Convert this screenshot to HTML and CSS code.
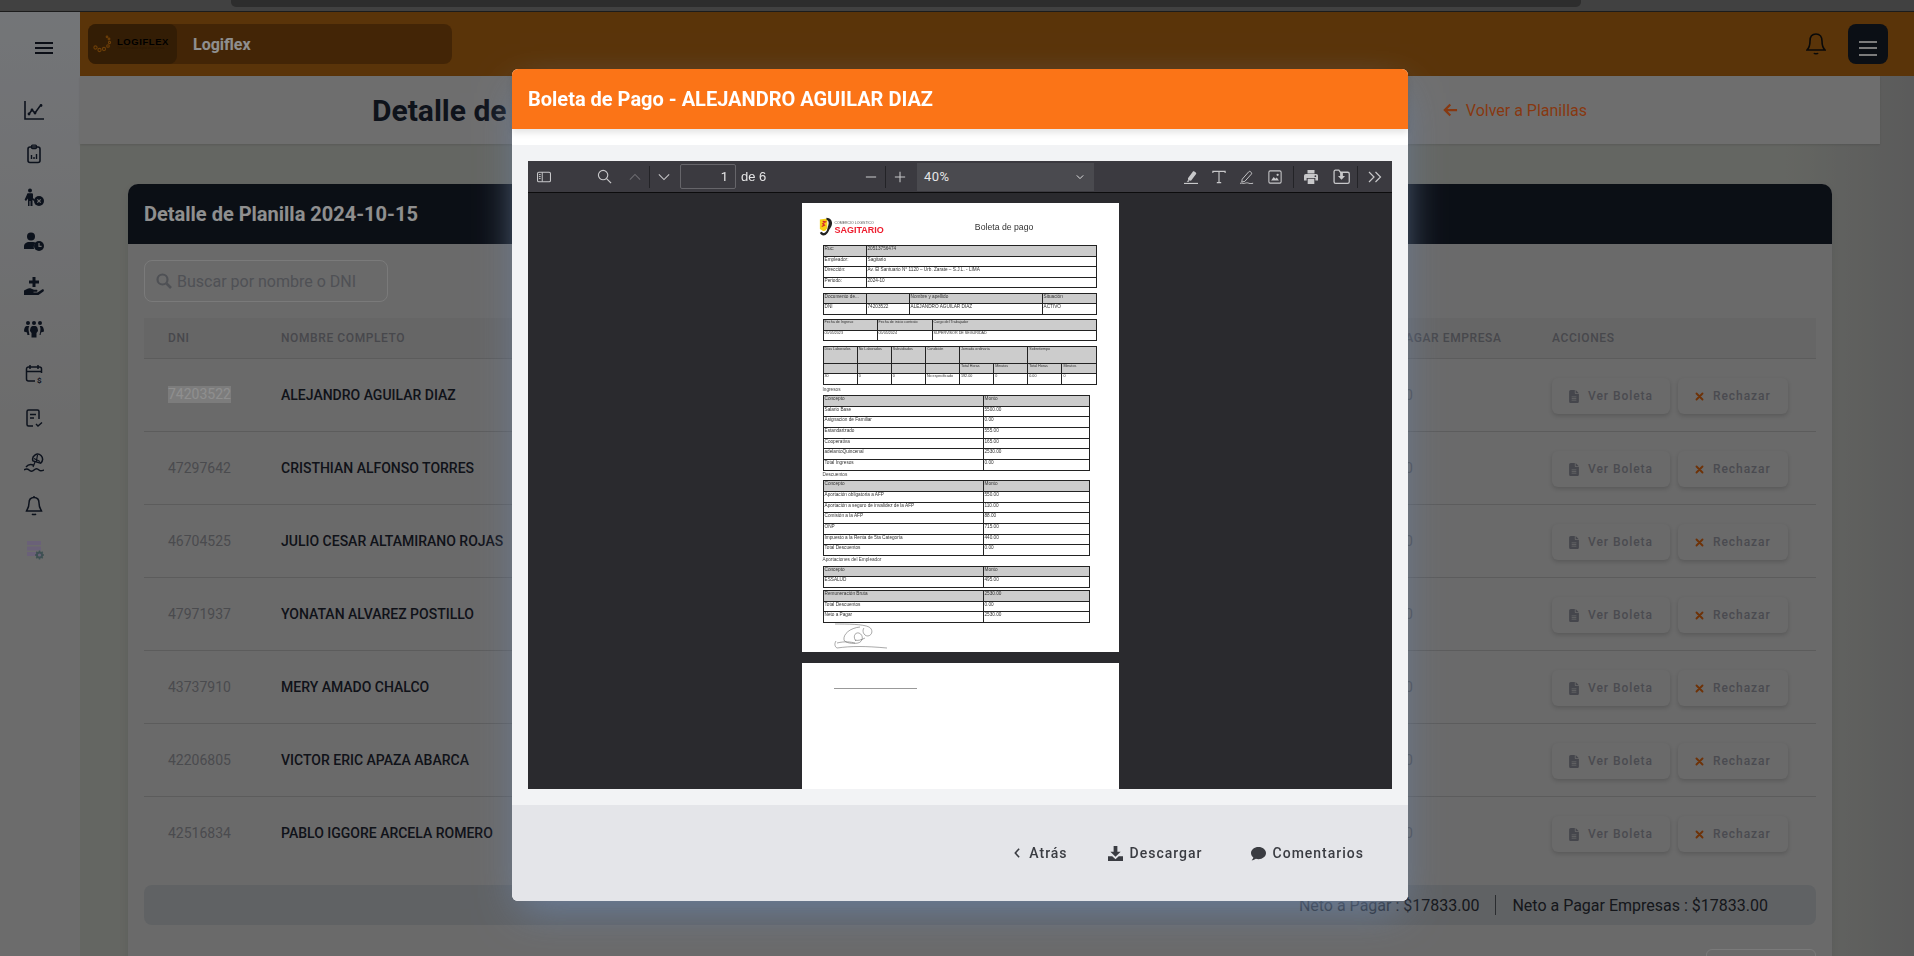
FILE: index.html
```html
<!DOCTYPE html>
<html lang="es">
<head>
  <meta charset="UTF-8" />
  <title>Logiflex - Detalle de Planilla</title>
  <meta name="viewport" content="width=device-width, initial-scale=1" />
  <link rel="stylesheet" href="styles.css">
</head>
<body>
  <svg class="sprite" aria-hidden="true">
    <symbol id="i-doc" viewBox="0 0 384 512"><path fill="currentColor" d="M64 0C29 0 0 29 0 64v384c0 35 29 64 64 64h256c35 0 64-29 64-64V160H256c-18 0-32-14-32-32V0H64zm192 0v128h128L256 0zM112 256h160c9 0 16 7 16 16s-7 16-16 16H112c-9 0-16-7-16-16s7-16 16-16zm0 64h160c9 0 16 7 16 16s-7 16-16 16H112c-9 0-16-7-16-16s7-16 16-16zm0 64h160c9 0 16 7 16 16s-7 16-16 16H112c-9 0-16-7-16-16s7-16 16-16z"/></symbol>
    <symbol id="i-x" viewBox="0 0 24 24"><path fill="none" stroke="currentColor" stroke-width="5" stroke-linecap="round" d="M4 4l16 16M20 4L4 20"/></symbol>
  </svg>

  <div class="browser-strip"><div class="browser-tab"></div></div>

  <div class="app">
    <aside class="sidebar">
      <button class="side-burger"><span></span><span></span><span></span></button>
      <nav class="side-nav">
        <svg viewBox="0 0 20 20"><path d="M1 1v18h19" fill="none" stroke="currentColor" stroke-width="1.600"/><path d="M5 14l3-4 3 3 5-7" fill="none" stroke="currentColor" stroke-width="1.500"/><circle cx="5" cy="14" r="1.400" fill="currentColor"/><circle cx="8" cy="10" r="1.400" fill="currentColor"/><circle cx="11" cy="13" r="1.400" fill="currentColor"/><circle cx="17" cy="5.500" r="1.400" fill="currentColor"/></svg>
        <svg viewBox="0 0 20 20"><rect x="4" y="3" width="12" height="15.500" rx="2" fill="none" stroke="currentColor" stroke-width="1.600"/><rect x="7.500" y="1.200" width="5" height="3.400" rx="1" fill="none" stroke="currentColor" stroke-width="1.300"/><path d="M7.500 15v-4M10 15v-2M12.500 15v-5" stroke="currentColor" stroke-width="1.400"/></svg>
        <svg viewBox="0 0 20 20"><circle cx="6" cy="2.500" r="2" fill="currentColor"/><path d="M3 6.500c0-.8.600-1.300 1.300-1.300h3.400c.7 0 1.300.5 1.300 1.300V10l2 2-1 1-1.500-1.300V18H6.500v-5h-1v5H4v-7.500L2 13 .6 11.800z" fill="currentColor"/><circle cx="15" cy="13" r="5" fill="currentColor"/><path d="M13.300 11.300l3.400 3.400M16.700 11.300l-3.400 3.400" stroke="#c3c3c3" stroke-width="1.200"/></svg>
        <svg viewBox="0 0 20 20"><circle cx="7" cy="4.500" r="4" fill="currentColor"/><path d="M0 17v-2.500C0 11.500 2.500 10 5 10h4c1 0 2 .2 2.700.7A6.500 6.500 0 0 0 10 17z" fill="currentColor"/><circle cx="15" cy="14" r="5" fill="currentColor"/><path d="M15 11v3.300h2.600" fill="none" stroke="#c3c3c3" stroke-width="1.200"/></svg>
        <svg viewBox="0 0 20 20"><path d="M8.500 1h3v3.500H15v3h-3.500V11h-3V7.500H5v-3h3.500z" fill="currentColor"/><path d="M0 14.500l3-1.500c1.500-.8 3-.8 4.500-.2l2.500 1h2.500c1.300 0 1.300 2 0 2H9.500v.6h4l4.500-2.900c1.400-.8 2.600 1 1.400 2L14.500 19H0z" fill="currentColor"/></svg>
        <svg viewBox="0 0 20 20"><circle cx="4" cy="3" r="2" fill="currentColor"/><circle cx="10" cy="3" r="2" fill="currentColor"/><circle cx="16" cy="3" r="2" fill="currentColor"/><path d="M2.500 6h2.800c-.7 1-1 3-.5 5.500l.7 3.500H3.400L3 12.500 0 11.500C0 8.500 1 6 2.500 6zM14.700 6h2.800c1.500 0 2.500 2.500 2.500 5.500l-3 1-.4 2.500h-1.100l.7-3.500c.5-2.500.2-4.500-.5-5.500zM8.500 6h3c1.500 0 2.500 2.500 2.500 5l-1.500 2v4.500h-5V13L6 11c0-2.500 1-5 2.500-5z" fill="currentColor"/></svg>
        <svg viewBox="0 0 20 20"><path d="M11 17H4.500A2 2 0 0 1 2.500 15V5a2 2 0 0 1 2-2h11a2 2 0 0 1 2 2v4M2.500 7.500h15M6 1v4M14 1v4" fill="none" stroke="currentColor" stroke-width="1.500"/><text class="side-dollar" x="13" y="19">$</text></svg>
        <svg viewBox="0 0 20 20"><path d="M9 18H4.500A1.500 1.500 0 0 1 3 16.500V3.500A1.500 1.500 0 0 1 4.500 2h9A1.500 1.500 0 0 1 15 3.500V11" fill="none" stroke="currentColor" stroke-width="1.500"/><path d="M6 6.500h6M6 10h4M12 16l2 2 4-3.500" fill="none" stroke="currentColor" stroke-width="1.400"/></svg>
        <svg viewBox="0 0 20 20"><path d="M9 9a5 5 0 0 1 8-5.500 5 5 0 0 1-.3 7.600z" fill="none" stroke="currentColor" stroke-width="1.500"/><path d="M13.500 3l-1.300 7M10 6.500l6 3M11 10l-2 5" fill="none" stroke="currentColor" stroke-width="1.200"/><path d="M2 15c2.500-3 5-3 8-1.500M0 18c2-1.500 3.500-1.500 5 0s3.500 1.500 5 0 3.500-1.500 5 0 3 .8 5 0" fill="none" stroke="currentColor" stroke-width="1.500"/></svg>
        <svg viewBox="0 0 20 20"><path d="M10 1.500c-3.500 0-5 2.500-5 5.500 0 5-2 6.500-2.500 8h15c-.5-1.500-2.500-3-2.500-8 0-3-1.500-5.500-5-5.500zM8 18c.7.8 3.300.8 4 0M10 0v1.500" fill="none" stroke="currentColor" stroke-width="1.500"/></svg>
        <svg viewBox="0 0 20 20"><rect x="3" y="1" width="14" height="4" fill="#bdaed6"/><rect x="3" y="6.500" width="14" height="4" fill="#bdaed6"/><rect x="3" y="12" width="14" height="4" fill="#bdaed6"/><circle cx="15.500" cy="15" r="2.600" fill="none" stroke="#6f8f94" stroke-width="2"/><path d="M15.500 10.500v2M15.500 17.500v2M11 15h2M18 15h2M12.300 11.800l1.400 1.400M17.300 16.800l1.400 1.400M18.700 11.800l-1.400 1.400M13.700 16.800l-1.400 1.400" stroke="#6f8f94" stroke-width="1.500"/></svg>
      </nav>
    </aside>

    <div class="main">
      <header class="topbar">
        <div class="brand">
          <div class="brand-logo">
            <svg viewBox="0 0 20 20" class="brand-mark"><g fill="none" stroke="#c2700f" stroke-width="1.100"><circle cx="2.500" cy="13.500" r="1.600"/><circle cx="6.500" cy="16" r="1.600"/><circle cx="11" cy="15" r="1.600"/><circle cx="15" cy="12" r="1.300"/><circle cx="16.500" cy="8.500" r="1.100"/><circle cx="16" cy="5" r=".9"/><circle cx="14" cy="2.800" r=".8"/></g></svg>
            <div class="brand-words"><span class="brand-name">LOGIFLEX</span><span class="brand-sub">Transformación digital de procesos</span></div>
          </div>
          <span class="brand-title">Logiflex</span>
        </div>
        <div class="topbar-right">
          <svg viewBox="0 0 20 24" class="top-bell"><path d="M10 2C6 2 4 5 4 9c0 6-2 8-3 9h18c-1-1-3-3-3-9 0-4-2-7-6-7zM8 21c.5 1 3.500 1 4 0" fill="none" stroke="currentColor" stroke-width="1.600"/></svg>
          <button class="top-menu"><span></span><span></span><span></span></button>
        </div>
      </header>

      <section class="page-head">
        <h1>Detalle de</h1>
        <a class="back-link"><svg viewBox="0 0 16 14"><path d="M15 7H2.500M7.800 1.200L2 7l5.800 5.800" fill="none" stroke="currentColor" stroke-width="2.400"/></svg>Volver a Planillas</a>
      </section>

      <section class="card">
        <div class="card-head">Detalle de Planilla 2024-10-15</div>
        <div class="card-body">
          <div class="search">
            <svg viewBox="0 0 16 16"><circle cx="6.500" cy="6.500" r="5" fill="none" stroke="currentColor" stroke-width="2.200"/><path d="M10.500 10.500L15 15" stroke="currentColor" stroke-width="2.600"/></svg>
            <span>Buscar por nombre o DNI</span>
          </div>

          <table class="grid">
            <colgroup><col class="c-dni"><col class="c-name"><col class="c-neto"><col class="c-emp"><col class="c-act"></colgroup>
            <thead>
              <tr><th>DNI</th><th>Nombre completo</th><th></th><th>Neto a pagar empresa</th><th>Acciones</th></tr>
            </thead>
            <tbody>
              <tr><td class="dni"><span class="picked">74203522</span></td><td class="name">ALEJANDRO AGUILAR DIAZ</td><td></td><td class="amount">$2530.00</td><td><div class="actions"><button class="act"><svg class="act-doc"><use href="#i-doc"/></svg>Ver Boleta</button><button class="act"><svg class="act-x"><use href="#i-x"/></svg>Rechazar</button></div></td></tr>
              <tr><td class="dni">47297642</td><td class="name">CRISTHIAN ALFONSO TORRES</td><td></td><td class="amount">$2530.00</td><td><div class="actions"><button class="act"><svg class="act-doc"><use href="#i-doc"/></svg>Ver Boleta</button><button class="act"><svg class="act-x"><use href="#i-x"/></svg>Rechazar</button></div></td></tr>
              <tr><td class="dni">46704525</td><td class="name">JULIO CESAR ALTAMIRANO ROJAS</td><td></td><td class="amount">$2530.00</td><td><div class="actions"><button class="act"><svg class="act-doc"><use href="#i-doc"/></svg>Ver Boleta</button><button class="act"><svg class="act-x"><use href="#i-x"/></svg>Rechazar</button></div></td></tr>
              <tr><td class="dni">47971937</td><td class="name">YONATAN ALVAREZ POSTILLO</td><td></td><td class="amount">$2530.00</td><td><div class="actions"><button class="act"><svg class="act-doc"><use href="#i-doc"/></svg>Ver Boleta</button><button class="act"><svg class="act-x"><use href="#i-x"/></svg>Rechazar</button></div></td></tr>
              <tr><td class="dni">43737910</td><td class="name">MERY AMADO CHALCO</td><td></td><td class="amount">$2530.00</td><td><div class="actions"><button class="act"><svg class="act-doc"><use href="#i-doc"/></svg>Ver Boleta</button><button class="act"><svg class="act-x"><use href="#i-x"/></svg>Rechazar</button></div></td></tr>
              <tr><td class="dni">42206805</td><td class="name">VICTOR ERIC APAZA ABARCA</td><td></td><td class="amount">$2530.00</td><td><div class="actions"><button class="act"><svg class="act-doc"><use href="#i-doc"/></svg>Ver Boleta</button><button class="act"><svg class="act-x"><use href="#i-x"/></svg>Rechazar</button></div></td></tr>
              <tr><td class="dni">42516834</td><td class="name">PABLO IGGORE ARCELA ROMERO</td><td></td><td class="amount">$2530.00</td><td><div class="actions"><button class="act"><svg class="act-doc"><use href="#i-doc"/></svg>Ver Boleta</button><button class="act"><svg class="act-x"><use href="#i-x"/></svg>Rechazar</button></div></td></tr>
            </tbody>
          </table>

          <div class="totals">
            <span>Neto a Pagar : $17833.00</span>
            <i></i>
            <span>Neto a Pagar Empresas : $17833.00</span>
          </div>
          <div class="pager"><button class="pager-btn"></button></div>
        </div>
      </section>
    </div>
  </div>

  <div class="backdrop"></div>

  <div class="modal">
    <div class="modal-head">Boleta de Pago - ALEJANDRO AGUILAR DIAZ</div>
    <div class="modal-gap"></div>
    <div class="modal-body">
      <div class="viewer">
        <div class="vbar">
          <div class="vbar-left">
            <button class="vb"><svg viewBox="0 0 16 12"><rect x=".6" y=".6" width="14.800" height="10.800" rx="1.500" fill="none" stroke="currentColor" stroke-width="1.200"/><path d="M6 .6v10.800M2.200 3.200h2M2.200 5.500h2M2.200 7.800h2" stroke="currentColor" stroke-width="1.100"/></svg></button>
            <button class="vb vb-search"><svg viewBox="0 0 16 16"><circle cx="6.500" cy="6.500" r="5" fill="none" stroke="currentColor" stroke-width="1.200"/><path d="M10.200 10.200L15 15" stroke="currentColor" stroke-width="1.300"/></svg></button>
            <button class="vb vb-off"><svg viewBox="0 0 14 8"><path d="M1 7l6-6 6 6" fill="none" stroke="currentColor" stroke-width="1.200"/></svg></button>
            <i class="vsep"></i>
            <button class="vb"><svg viewBox="0 0 14 8"><path d="M1 1l6 6 6-6" fill="none" stroke="currentColor" stroke-width="1.200"/></svg></button>
            <span class="vpage">1</span>
            <span class="vof">de 6</span>
          </div>
          <div class="vbar-mid">
            <button class="vb"><svg viewBox="0 0 14 14"><path d="M1 7h12" stroke="currentColor" stroke-width="1.200"/></svg></button>
            <i class="vsep"></i>
            <button class="vb"><svg viewBox="0 0 14 14"><path d="M1 7h12M7 1v12" stroke="currentColor" stroke-width="1.200"/></svg></button>
            <div class="vzoom"><span>40%</span><svg viewBox="0 0 10 6"><path d="M1 1l4 4 4-4" fill="none" stroke="currentColor" stroke-width="1.200"/></svg></div>
          </div>
          <div class="vbar-right">
            <button class="vb"><svg viewBox="0 0 16 16"><path d="M4.500 9.500L10 2c.5-.6 1.200-.7 1.800-.3l1.700 1.200c.6.500.7 1.200.3 1.800L8 12.200l-3.200-.4zM4.800 11.500l-1.800 1.800h3" fill="currentColor"/><path d="M0 15.400h16" stroke="currentColor" stroke-width="1.400"/></svg></button>
            <button class="vb"><svg viewBox="0 0 16 16"><path d="M1 3.500V1.500h14v2M8 1.500v13M5.500 14.500h5" fill="none" stroke="currentColor" stroke-width="1.300"/></svg></button>
            <button class="vb"><svg viewBox="0 0 16 16"><path d="M2.500 10.500L10 2c.6-.6 1.300-.6 1.900-.1l1 .9c.6.600.6 1.300.1 1.900L5.500 13l-3.500.8zM0 15.300c2-1 3 .5 5 0s3-1 5-.2 3 .4 5 0" fill="none" stroke="currentColor" stroke-width="1.100"/></svg></button>
            <button class="vb"><svg viewBox="0 0 16 16"><rect x="1" y="1" width="14" height="14" rx="1.500" fill="none" stroke="currentColor" stroke-width="1.200"/><path d="M3.500 12l3-4 2 2 1.500-1.500 2.500 3.500z" fill="currentColor"/><circle cx="11" cy="5.500" r="1.300" fill="currentColor"/></svg></button>
            <i class="vsep vsep-wide"></i>
            <button class="vb"><svg viewBox="0 0 16 16"><path d="M4 0h8v4H4zM2 4.500h12a2 2 0 0 1 2 2V12h-3V9H3v3H0V6.500a2 2 0 0 1 2-2zM4.200 10h7.600v6H4.200z" fill="currentColor"/><circle cx="13" cy="7" r="1" fill="#3b3a40"/></svg></button>
            <button class="vb vb-save"><svg viewBox="0 0 16 16"><path d="M1 3.500C1 2.700 1.500 2 2.300 2h3.200l1.500 2h6.800c.8 0 1.500.7 1.500 1.500V13c0 .8-.7 1.500-1.500 1.500H2.500C1.700 14.500 1 13.800 1 13z" fill="none" stroke="currentColor" stroke-width="1.200"/><path d="M6.700 4.500h2.600v3h2L8 11 4.700 7.500h2z" fill="currentColor"/></svg></button>
            <i class="vsep vsep-last"></i>
            <button class="vb"><svg viewBox="0 0 14 12"><path d="M1 1l5 5-5 5M7.500 1l5 5-5 5" fill="none" stroke="currentColor" stroke-width="1.200"/></svg></button>
          </div>
        </div>

        <div class="vpages">
          <article class="sheet">
            <div class="doc-head">
              <div class="doc-logo">
                <svg viewBox="0 0 16 20" class="doc-hook"><path d="M2 2l8-1v9c0 3-3 5-5 4l-3-2z" fill="#f5cf16"/><path d="M9 0c4 0 6 3 6 6s-2 5-3 7c-1 3-3 6-6 6-2 0-4-2-4-3l2-1c1 1 2 2 3 1 3-1 3-5 4-8s0-5-2-6z" fill="#222"/><path d="M5 4l3 .5-3 2 2 1.500-3 1.500" fill="none" stroke="#d8222a" stroke-width="1.200"/></svg>
                <div class="doc-brand"><span class="doc-brand-top">COMERCIO LOGISTICO</span><span class="doc-brand-big">SAGITARIO</span></div>
              </div>
              <div class="doc-title">Boleta de pago</div>
            </div>

            <table class="dt dt-1">
              <colgroup><col class="w43"><col></colgroup>
              <tr class="g"><td>Ruc:</td><td>20513756474</td></tr>
              <tr><td>Empleador:</td><td>Sagitario</td></tr>
              <tr><td>Dirección:</td><td>Av. El Santuario N° 1120 – Urb. Zarate – S.J.L. - LIMA</td></tr>
              <tr><td>Periodo:</td><td>2024-10</td></tr>
            </table>

            <table class="dt dt-2">
              <colgroup><col class="w43"><col class="w43"><col class="w133"><col></colgroup>
              <tr class="g"><td>Documento de...</td><td></td><td>Nombre y apellido</td><td>Situación</td></tr>
              <tr><td>DNI</td><td>74203522</td><td>ALEJANDRO AGUILAR DIAZ</td><td>ACTIVO</td></tr>
            </table>

            <table class="dt dt-3 dt-small">
              <colgroup><col class="w54"><col class="w55"><col></colgroup>
              <tr class="g"><td>Fecha de Ingreso</td><td>Fecha de inicio contrato</td><td>Cargo del Trabajador</td></tr>
              <tr><td>05/05/2023</td><td>05/05/2024</td><td>SUPERVISOR DE SEGURIDAD</td></tr>
            </table>

            <table class="dt dt-4 dt-small">
              <tr class="g tall"><td>Días Laborados</td><td>No Laborados</td><td>Subsidiados</td><td>Condición</td><td colspan="2">Jornada ordinaria</td><td colspan="2">Sobretiempo</td></tr>
              <tr class="g"><td></td><td></td><td></td><td></td><td>Total Horas</td><td>Minutos</td><td>Total Horas</td><td>Minutos</td></tr>
              <tr><td>30</td><td>0</td><td>0</td><td>No especificado</td><td>192.00</td><td>0</td><td>0.00</td><td>0</td></tr>
            </table>

            <p class="doc-label">Ingresos</p>
            <table class="dt dt-n">
              <colgroup><col class="w160"><col></colgroup>
              <tr class="g"><td>Concepto</td><td>Monto</td></tr>
              <tr><td>Salario Base</td><td>5500.00</td></tr>
              <tr><td>Asignacion de Familiar</td><td>0.00</td></tr>
              <tr><td>Estandarizado</td><td>555.00</td></tr>
              <tr><td>Cooperativa</td><td>165.00</td></tr>
              <tr><td>adelantoQuincenal</td><td>2530.00</td></tr>
              <tr><td>Total Ingresos</td><td>0.00</td></tr>
            </table>

            <p class="doc-label">Descuentos</p>
            <table class="dt dt-n">
              <colgroup><col class="w160"><col></colgroup>
              <tr class="g"><td>Concepto</td><td>Monto</td></tr>
              <tr><td>Aportación obligatoria a AFP</td><td>550.00</td></tr>
              <tr><td>Aportación a seguro de invalidez de la AFP</td><td>110.00</td></tr>
              <tr><td>Comisión a la AFP</td><td>88.00</td></tr>
              <tr><td>ONP</td><td>715.00</td></tr>
              <tr><td>Impuesto a la Renta de 5ta Categoría</td><td>440.00</td></tr>
              <tr><td>Total Descuentos</td><td>0.00</td></tr>
            </table>

            <p class="doc-label">Aportaciones del Empleador</p>
            <table class="dt dt-n">
              <colgroup><col class="w160"><col></colgroup>
              <tr class="g"><td>Concepto</td><td>Monto</td></tr>
              <tr><td>ESSALUD</td><td>495.00</td></tr>
            </table>
            <table class="dt dt-n dt-last">
              <colgroup><col class="w160"><col></colgroup>
              <tr class="g"><td>Remuneración Bruta</td><td>2530.00</td></tr>
              <tr><td>Total Descuentos</td><td>0.00</td></tr>
              <tr><td>Neto a Pagar</td><td>2530.00</td></tr>
            </table>

            <svg viewBox="0 0 56 27" class="doc-sign"><path d="M1 1c12 0 28 0 34 3 4 2 4 8-1 9-5 0-6-6-4-8M26 4c-10 1-17 7-16 13 1 3 9 4 14 3s6-8 1-10c-5-1-6 5-3 8M2 18c-2 3-1 6 1 7 14-2 28-2 50 0M21 17c3 1 6 0 10-2M3 20c8-2 14-1 18 0" fill="none" stroke="#555" stroke-width=".5"/></svg>
          </article>

          <article class="sheet sheet-2"><div class="sign-line"></div></article>
        </div>
      </div>
    </div>
    <div class="modal-foot">
      <button class="foot-btn"><svg viewBox="0 0 8 14" class="foot-chev"><path d="M6.500 2L2 7l4.500 5" fill="none" stroke="currentColor" stroke-width="1.800"/></svg>Atrás</button>
      <button class="foot-btn"><svg viewBox="0 0 16 16" class="foot-ico"><path d="M6 0h4v6h3.500L8 11.500 2.500 6H6zM0 11h4.500L8 14l3.500-3H16v5H0z" fill="currentColor"/></svg>Descargar</button>
      <button class="foot-btn foot-last"><svg viewBox="0 0 16 16" class="foot-ico"><path d="M8 1c4.400 0 8 2.800 8 6.500S12.400 14 8 14c-1 0-2-.2-2.800-.4C4 14.500 2.500 15.200.6 15.200c1-.9 1.700-2 1.900-3C.9 11 0 9.400 0 7.500 0 3.800 3.600 1 8 1z" fill="currentColor"/></svg>Comentarios</button>
    </div>
  </div>
</body>
</html>
```

FILE: styles.css
```css
*{box-sizing:border-box;}
html,body{height:100%;}
body{margin:0;overflow:hidden;font-family:Roboto,sans-serif;background:#bdbdbd;color:#1c2433;}
button{font-family:inherit;border:none;background:none;padding:0;margin:0;}
.sprite{display:none;}

.browser-strip{height:12px;background:#757575;border-bottom:1px solid #333;padding-left:231px;}
.browser-tab{width:1350px;height:7px;background:#505050;border-radius:0 0 5px 5px;}

.app{display:flex;height:944px;}

/* sidebar */
.sidebar{width:80px;flex:none;background:linear-gradient(180deg,#ced1d6,#c0c0c0 45%);color:#172033;}
.side-burger{display:block;width:18px;margin:30px 0 0 35px;}
.side-burger span{display:block;height:2px;background:#141a28;margin-bottom:3px;}
.side-burger span:last-child{margin-bottom:0;}
.side-nav{margin-top:34px;padding-left:14px;}
.side-nav svg{display:block;width:40px;height:44px;padding:12px 10px;}
.side-dollar{font:bold 8px Roboto,sans-serif;fill:currentColor;}

/* main */
.main{flex:1;min-width:0;background:linear-gradient(90deg,#b3b6af,#b3b6af 93%,#a2a2a2);}
.topbar{height:64px;background:#a15d10;display:flex;align-items:center;justify-content:space-between;padding:0 26px 0 8px;}
.brand{width:364px;height:40px;background:#78430b;border-radius:8px;display:flex;align-items:center;}
.brand-logo{width:89px;height:40px;background:#5c3409;border-radius:8px;display:flex;align-items:center;padding-left:5px;gap:4px;}
.brand-mark{width:20px;height:20px;flex:none;}
.brand-words{display:flex;flex-direction:column;}
.brand-name{font:bold 9.500px "Liberation Sans",sans-serif;letter-spacing:.55px;color:#000;line-height:9px;}
.brand-sub{font-size:3px;color:#4a2a07;line-height:5px;white-space:nowrap;}
.brand-title{margin-left:16px;font-size:16px;font-weight:700;color:#fff;}
.topbar-right{display:flex;align-items:center;gap:22px;}
.top-bell{width:20px;height:24px;color:#111;}
.top-menu{width:40px;height:40px;background:#141b27;border-radius:8px;padding-top:13px;}
.top-menu span{display:block;width:18px;height:2px;background:#dcdcdc;margin:0 auto 4.500px;}

.page-head{height:68px;width:1800px;background:#c5c5c5;box-shadow:0 1px 2px rgba(0,0,0,.12);display:flex;align-items:center;justify-content:space-between;padding:0 293px 0 292px;}
.page-head h1{margin:0;font-size:30px;font-weight:700;color:#1a2230;}
.back-link{display:flex;align-items:center;gap:8px;font-size:16px;color:#f0651d;}
.back-link svg{width:15px;height:14px;}

.card{margin:40px 82px 0 48px;background:#bdbdbd;border-radius:10px 10px 0 0;box-shadow:0 4px 10px rgba(0,0,0,.08);}
.card-head{height:60px;background:#141b27;border-radius:10px 10px 0 0;padding-left:16px;display:flex;align-items:center;font-size:20px;font-weight:700;color:#fff;}
.card-body{padding:16px;}

.search{width:244px;height:42px;border:1px solid #dadada;border-radius:8px;display:flex;align-items:center;padding-left:11px;gap:5px;color:#8d9098;font-size:16px;}
.search svg{width:16px;height:16px;}

.grid{margin-top:16px;width:100%;border-collapse:collapse;table-layout:fixed;}
.c-dni{width:113px;}
.c-name{width:320px;}
.c-neto{width:748px;}
.c-emp{width:203px;}
.c-act{width:288px;}
.grid th{height:40px;background:#b6b6b6;padding:0 24px;font-size:12px;font-weight:500;letter-spacing:.6px;text-transform:uppercase;text-align:left;color:#7f8088;white-space:nowrap;border-bottom:1px solid #a4a4a4;}
.grid td{height:73px;padding:0 24px;font-size:14px;border-bottom:1px solid #a4a4a4;white-space:nowrap;color:#85868c;}
.grid tr:last-child td{border-bottom:none;}
.grid td.name{font-weight:500;color:#1c222e;}
.grid td.amount{padding-left:29px;}
.picked{background:#dddddd;color:#fff;display:inline-block;line-height:17px;}
.actions{display:flex;gap:8px;padding-top:3px;}
.act{height:36px;padding:0 17px;border-radius:6px;background:#bdbdbd;box-shadow:0 2px 4px rgba(0,0,0,.16);font-size:12px;font-weight:500;letter-spacing:.95px;color:#85868f;display:flex;align-items:center;}
.act-doc{width:10px;height:13px;margin-right:9px;color:#7c7e88;}
.act-x{width:9px;height:9px;margin-right:9px;color:#c4590e;}

.totals{margin-top:16px;height:40px;background:#abafb3;border-radius:8px;display:flex;align-items:center;justify-content:flex-end;padding-right:48px;font-size:16px;color:#272a31;gap:16px;}
.totals i{width:1px;height:20px;background:#4c4f54;}
.pager{margin-top:24px;display:flex;justify-content:flex-end;}
.pager-btn{width:110px;height:36px;border:1px solid #dadada;border-radius:6px;}

/* modal */
.backdrop{position:fixed;inset:0;background:rgba(0,0,0,.44);}
.modal{position:fixed;left:512px;top:69px;width:896px;height:832px;background:#fff;border-radius:6px;box-shadow:0 16px 40px -8px #6b7f9e;display:flex;flex-direction:column;}
.modal-head{height:60px;flex:none;background:#fb7417;border-radius:6px 6px 0 0;padding-left:16px;display:flex;align-items:center;font-size:20px;font-weight:700;color:#fff;box-shadow:0 4px 6px rgba(0,0,0,.1);}
.modal-gap{height:16px;flex:none;}
.modal-body{flex:none;height:660px;padding:16px;background:#f2f3f5;}
.modal-foot{flex:1;background:#e4e5e9;border-radius:0 0 6px 6px;display:flex;align-items:center;justify-content:flex-end;padding-right:28px;gap:8px;}
.foot-btn{display:flex;align-items:center;padding:8px 16px;font-size:14px;font-weight:500;letter-spacing:1px;color:#3a3c42;}
.foot-last{margin-left:8px;}
.foot-chev{width:8px;height:12px;margin-right:8px;}
.foot-ico{width:15px;height:15px;margin-right:7px;}

/* pdf viewer */
.viewer{height:628px;background:#2a2a2e;display:flex;flex-direction:column;}
.vbar{height:32px;flex:none;background:#3b3a40;border-bottom:1px solid #0c0c0d;display:grid;grid-template-columns:327px 320px 1fr;padding-left:2px;color:#c8c8ca;}
.vbar-left,.vbar-mid,.vbar-right{display:flex;align-items:center;}
.vb{width:28px;height:28px;display:flex;align-items:center;justify-content:center;color:#c8c8ca;}
.vb svg{width:14px;height:14px;}
.vb-search{margin-left:32px;margin-right:3px;}
.vb-search svg{width:15px;height:15px;}
.vb-off{color:#6d6c71;}
.vb-save{margin-left:2px;}
.vb-save svg{width:17px;height:17px;}
.vbar-left .vb:nth-of-type(3) svg,.vbar-left .vb:nth-of-type(4) svg{width:12px;}
.vbar-mid .vb svg{width:12px;height:12px;}
.vsep{width:1px;height:22px;background:#232327;flex:none;}
.vsep-wide{margin:0 3px 0 4px;}
.vsep-last{margin:0 3px 0 2px;}
.vpage{width:56px;height:25px;margin-left:2px;border:1px solid #66656a;border-radius:2px;text-align:right;padding-right:7px;font-size:13px;line-height:23px;color:#e6e6e7;}
.vof{margin-left:5px;font:13px "Liberation Sans",sans-serif;color:#e6e6e7;}
.vzoom{width:177px;height:28px;margin-left:3px;background:#4a4a4f;display:flex;align-items:center;justify-content:space-between;padding:0 10px 0 7px;font-size:13px;letter-spacing:.4px;color:#e6e6e7;}
.vzoom svg{width:8px;height:6px;}

.vpages{flex:1;overflow:hidden;padding-top:10px;}
.sheet{width:317px;height:449px;margin:0 auto 11px;background:#fff;padding:0 21px;color:#444;font-family:"Liberation Sans",sans-serif;}
.sheet-2{height:130px;padding:25px 0 0 32px;}
.sign-line{width:83px;height:1px;background:#999;}
.doc-head{height:42px;display:flex;}
.doc-logo{display:flex;margin:14px 0 0 -5px;gap:2px;}
.doc-hook{width:15px;height:20px;flex:none;}
.doc-brand{display:flex;flex-direction:column;padding-top:4px;}
.doc-brand-top{font-size:3.500px;line-height:5px;color:#555;white-space:nowrap;}
.doc-brand-big{font-size:9px;line-height:9px;font-weight:700;color:#ee1c2e;}
.doc-title{margin:19px 0 0 91px;font-size:8.700px;line-height:11px;color:#333;white-space:nowrap;}

.dt{width:274px;border-collapse:collapse;table-layout:fixed;font-size:4.700px;line-height:5px;margin-bottom:4.500px;border:1px solid #666;}
.dt td{border:1px solid #222;padding:0 1px;vertical-align:top;height:10.500px;overflow:hidden;white-space:nowrap;color:#333;}
.dt .g td{background:#ccc;}
.dt-small{font-size:3.700px;}
.dt-4 .tall td{height:17px;}
.w43{width:43px;}
.w54{width:54px;}
.w55{width:55px;}
.w133{width:133px;}
.w160{width:160px;}
.dt-n{width:267px;margin-bottom:0;}
.dt-n td{height:10.700px;}
.dt-last{margin-top:2px;}
.doc-label{margin:0;height:9.500px;padding-top:1px;font-size:4.700px;line-height:6px;}
.dt-4{margin-bottom:1px;}
.doc-sign{display:block;width:56px;height:27px;margin:0 0 0 11px;}
```
